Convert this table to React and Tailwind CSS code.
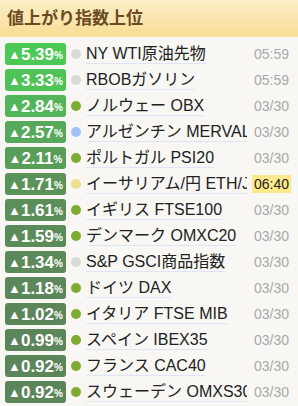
const rows = [
  { pct: '5.39', bg: 'bg-[#4cc854]', dot: 'bg-[#d9d9d9]', name: 'NY WTI原油先物', time: '05:59' },
  { pct: '3.33', bg: 'bg-[#4fc257]', dot: 'bg-[#d9d9d9]', name: 'RBOBガソリン', time: '05:59' },
  { pct: '2.84', bg: 'bg-[#53b55a]', dot: 'bg-[#7eab32]', name: 'ノルウェー OBX', time: '03/30' },
  { pct: '2.57', bg: 'bg-[#56a95a]', dot: 'bg-[#a2c1f5]', name: 'アルゼンチン MERVAL', time: '03/30' },
  { pct: '2.11', bg: 'bg-[#589d58]', dot: 'bg-[#7eab32]', name: 'ポルトガル PSI20', time: '03/30' },
  { pct: '1.71', bg: 'bg-[#5a9359]', dot: 'bg-[#efdd91]', name: 'イーサリアム/円 ETH/JPY', time: '06:40', hi: true },
  { pct: '1.61', bg: 'bg-[#5b8e59]', dot: 'bg-[#7eab32]', name: 'イギリス FTSE100', time: '03/30' },
  { pct: '1.59', bg: 'bg-[#5b8b59]', dot: 'bg-[#7eab32]', name: 'デンマーク OMXC20', time: '03/30' },
  { pct: '1.34', bg: 'bg-[#5c895a]', dot: 'bg-[#d9d9d9]', name: 'S&P GSCI商品指数', time: '03/30' },
  { pct: '1.18', bg: 'bg-[#5c875a]', dot: 'bg-[#7eab32]', name: 'ドイツ DAX', time: '03/30' },
  { pct: '1.02', bg: 'bg-[#5c865a]', dot: 'bg-[#7eab32]', name: 'イタリア FTSE MIB', time: '03/30' },
  { pct: '0.99', bg: 'bg-[#5c855a]', dot: 'bg-[#7eab32]', name: 'スペイン IBEX35', time: '03/30' },
  { pct: '0.92', bg: 'bg-[#5c855a]', dot: 'bg-[#7eab32]', name: 'フランス CAC40', time: '03/30' },
  { pct: '0.92', bg: 'bg-[#5c855a]', dot: 'bg-[#7eab32]', name: 'スウェーデン OMXS30', time: '03/30' },
]

export default function App() {
  return (
    <div className="w-[298px] h-[406px] overflow-hidden bg-[#f8f7f4] font-['Liberation_Sans','Noto_Sans_CJK_JP',sans-serif]">
      <div className="h-[37px] flex items-center pl-[7px] bg-gradient-to-b from-[#fcefc8] to-[#f7dc93]">
        <h2 className="text-[17px] font-bold text-[#6b4a24] leading-none">値上がり指数上位</h2>
      </div>

      <div className="pt-[4px]">
        {rows.map((r, idx) => (
          <div key={idx} className="h-[26px] flex items-center pl-[5px] pr-[7px]">
            <div className={`w-[61px] h-[22px] shrink-0 rounded-[3px] ${r.bg} flex items-center justify-center text-white font-bold`}>
              <span className="text-[13px] leading-none mt-[1px]">▲</span>
              <span className="text-[17px] leading-none">{r.pct}</span>
              <span className="text-[10px] leading-none mt-[4px]">%</span>
            </div>
            <div className={`w-[10px] h-[10px] rounded-full ml-[5px] shrink-0 ${r.dot}`} />
            <div className="flex-1 min-w-0 ml-[5px] mr-[5px] overflow-hidden whitespace-nowrap">
              <span className="text-[16px] text-[#222] leading-[19px] border-b border-[#dde5f7] pb-[1px]">
                {r.name}
              </span>
            </div>
            <div className="w-[39px] shrink-0 flex justify-center">
              <span className={`text-[14px] leading-[18px] px-[2px] ${r.hi ? 'bg-[#fde98a] text-[#222]' : 'text-[#a9a9a9]'}`}>
                {r.time}
              </span>
            </div>
          </div>
        ))}
      </div>
    </div>
  )
}
